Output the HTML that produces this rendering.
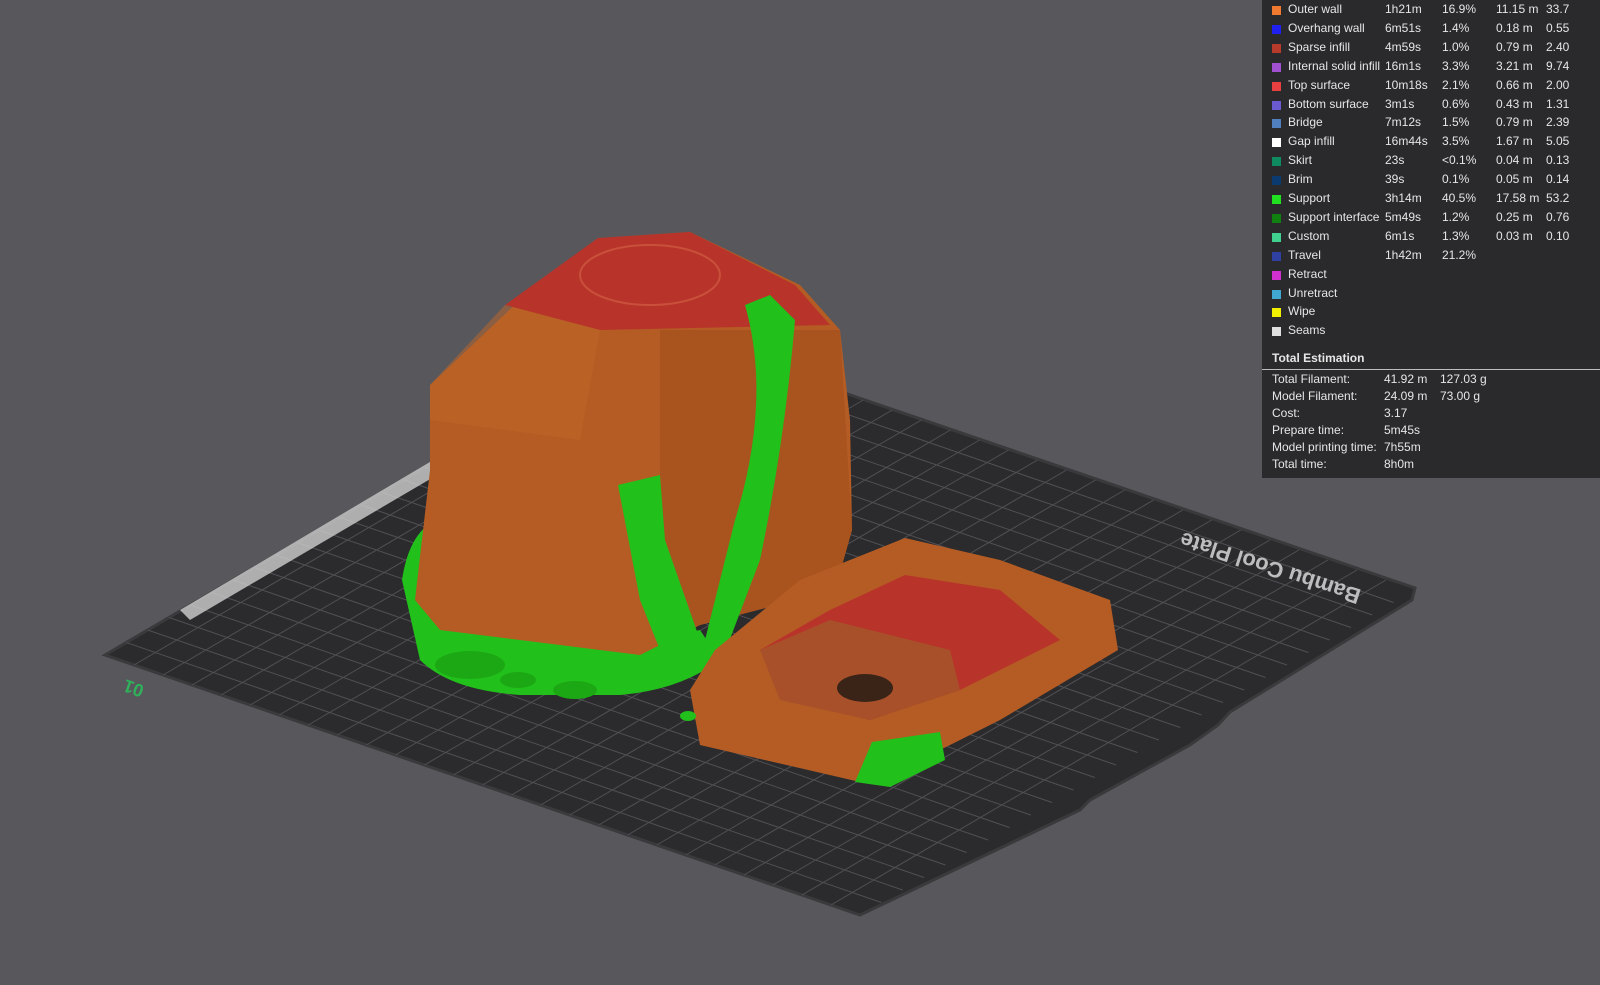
<!DOCTYPE html>
<html><head><meta charset="utf-8"><style>
body{margin:0;width:1600px;height:985px;background:#58585c;overflow:hidden;font-family:"Liberation Sans",sans-serif;position:relative}
svg{position:absolute;left:0;top:0}
#panel{position:absolute;left:1262px;top:0;width:338px;height:478px;background:#2a2a2c;color:#e6e6e6;font-size:12px}
.r{position:absolute;left:0;height:19px;white-space:nowrap}
.r span{position:absolute}
.sw{width:9px;height:9px;top:4px;left:10px}
</style></head><body>
<svg width="1600" height="985" id="s">
<polygon points="105,655 660,330 1415,588 1412,600 1230,712 1218,725 1190,745 1090,800 1080,810 860,915" fill="#2b2b2e" stroke="#3a3a3d" stroke-width="3"/>
<g id="grid" stroke="#505054" stroke-width="1"></g>
<polygon points="180,610 430,462 432,478 190,620" fill="#cfcfcf" opacity="0.8"/>
<text x="0" y="0" transform="translate(1362,590) rotate(198)" fill="#bdbdbd" font-size="22" font-weight="bold">Bambu Cool Plate</text>
<text x="0" y="0" transform="translate(145,686) rotate(200)" fill="#2fb05a" font-size="18" font-weight="bold">01</text>
<!-- green base supports -->
<path d="M402,580 Q408,540 428,525 L440,610 L600,650 L700,630 L720,660 Q680,690 620,695 L520,695 Q450,690 420,660 Z" fill="#22c01a"/>
<ellipse cx="470" cy="665" rx="35" ry="14" fill="#1ca814"/>
<ellipse cx="575" cy="690" rx="22" ry="9" fill="#1ca814"/>
<ellipse cx="518" cy="680" rx="18" ry="8" fill="#1ca814"/>
<!-- box -->
<path d="M430,385 L520,300 L600,238 L690,232 L800,285 L840,330 L850,420 L852,530 L835,590 L700,625 L640,655 L440,630 L415,600 L430,470 Z" fill="#b45c24"/>
<path d="M660,330 L840,330 L852,530 L835,590 L700,625 L660,640 Z" fill="#a9531f"/>
<path d="M505,305 L598,238 L690,232 L795,285 L830,325 L600,330 Z" fill="#b8332a"/>
<ellipse cx="650" cy="275" rx="70" ry="30" fill="none" stroke="#c9503a" stroke-width="2"/>
<path d="M430,385 L505,305 L600,330 L580,440 L430,420 Z" fill="#c06628" opacity="0.5"/>
<!-- green strands -->
<path d="M745,305 L770,295 L795,320 Q785,440 760,560 L722,660 L700,660 L735,520 Q772,400 745,305 Z" fill="#22c01a"/>
<path d="M618,485 L660,475 L665,540 L700,640 L668,670 L640,600 Z" fill="#22c01a"/>
<!-- tray -->
<path d="M690,690 L715,650 L800,580 L905,538 L1000,560 L1110,600 L1118,650 L1000,720 L900,770 L860,782 L700,745 Z" fill="#b45c24"/>
<path d="M760,650 L830,610 L905,575 L1000,590 L1060,640 L960,690 L870,720 L790,700 Z" fill="#b8332a"/>
<path d="M760,650 L830,620 L950,650 L960,690 L870,720 L780,700 Z" fill="#a8502a"/>
<ellipse cx="865" cy="688" rx="28" ry="14" fill="#3a2418"/>
<path d="M855,782 L872,742 L940,732 L945,760 L890,787 Z" fill="#22c01a"/>
<ellipse cx="688" cy="716" rx="8" ry="5" fill="#22c01a"/>
</svg>
<script>
var g=document.getElementById('grid'),O=[105,655],U=[755,260],V=[555,-325],N=26,h='';
for(var i=1;i<N;i++){var t=i/N;
h+='<line x1="'+(O[0]+U[0]*t)+'" y1="'+(O[1]+U[1]*t)+'" x2="'+(O[0]+U[0]*t+V[0])+'" y2="'+(O[1]+U[1]*t+V[1])+'"/>';
h+='<line x1="'+(O[0]+V[0]*t)+'" y1="'+(O[1]+V[1]*t)+'" x2="'+(O[0]+V[0]*t+U[0])+'" y2="'+(O[1]+V[1]*t+U[1])+'"/>';}
g.innerHTML=h;
</script>
<div id="panel">
<div id="rows"></div>
<div style="position:absolute;left:10px;top:351px;font-weight:bold;font-size:12px">Total Estimation</div>
<div style="position:absolute;left:0;top:369px;width:338px;height:1px;background:#bdbdbd"></div>
<div id="tot"></div>
</div>
<script>
var d=[["#f07a30","Outer wall","1h21m","16.9%","11.15 m","33.7"],["#2020f0","Overhang wall","6m51s","1.4%","0.18 m","0.55"],["#b83a2a","Sparse infill","4m59s","1.0%","0.79 m","2.40"],["#a050d0","Internal solid infill","16m1s","3.3%","3.21 m","9.74"],["#e84040","Top surface","10m18s","2.1%","0.66 m","2.00"],["#6a5ad0","Bottom surface","3m1s","0.6%","0.43 m","1.31"],["#5080c0","Bridge","7m12s","1.5%","0.79 m","2.39"],["#ffffff","Gap infill","16m44s","3.5%","1.67 m","5.05"],["#108a60","Skirt","23s","&lt;0.1%","0.04 m","0.13"],["#0a3a70","Brim","39s","0.1%","0.05 m","0.14"],["#20e020","Support","3h14m","40.5%","17.58 m","53.2"],["#108010","Support interface","5m49s","1.2%","0.25 m","0.76"],["#40d090","Custom","6m1s","1.3%","0.03 m","0.10"],["#3040a0","Travel","1h42m","21.2%","",""],["#d030d0","Retract","","","",""],["#40a8d0","Unretract","","","",""],["#f0f000","Wipe","","","",""],["#e0e0e0","Seams","","","",""]];
var h='';d.forEach(function(r,i){var y=2+i*18.9;h+='<div class="r" style="top:'+y+'px"><span class="sw" style="background:'+r[0]+'"></span><span style="left:26px">'+r[1]+'</span><span style="left:123px">'+r[2]+'</span><span style="left:180px">'+r[3]+'</span><span style="left:234px">'+r[4]+'</span><span style="left:284px">'+r[5]+'</span></div>';});
document.getElementById('rows').innerHTML=h;
var t=[["Total Filament:","41.92 m","127.03 g"],["Model Filament:","24.09 m","73.00 g"],["Cost:","3.17",""],["Prepare time:","5m45s",""],["Model printing time:","7h55m",""],["Total time:","8h0m",""]];
h='';t.forEach(function(r,i){h+='<div class="r" style="top:'+(372+i*17)+'px"><span style="left:10px">'+r[0]+'</span><span style="left:122px">'+r[1]+'</span><span style="left:178px">'+r[2]+'</span></div>';});
document.getElementById('tot').innerHTML=h;
</script>
</body></html>
